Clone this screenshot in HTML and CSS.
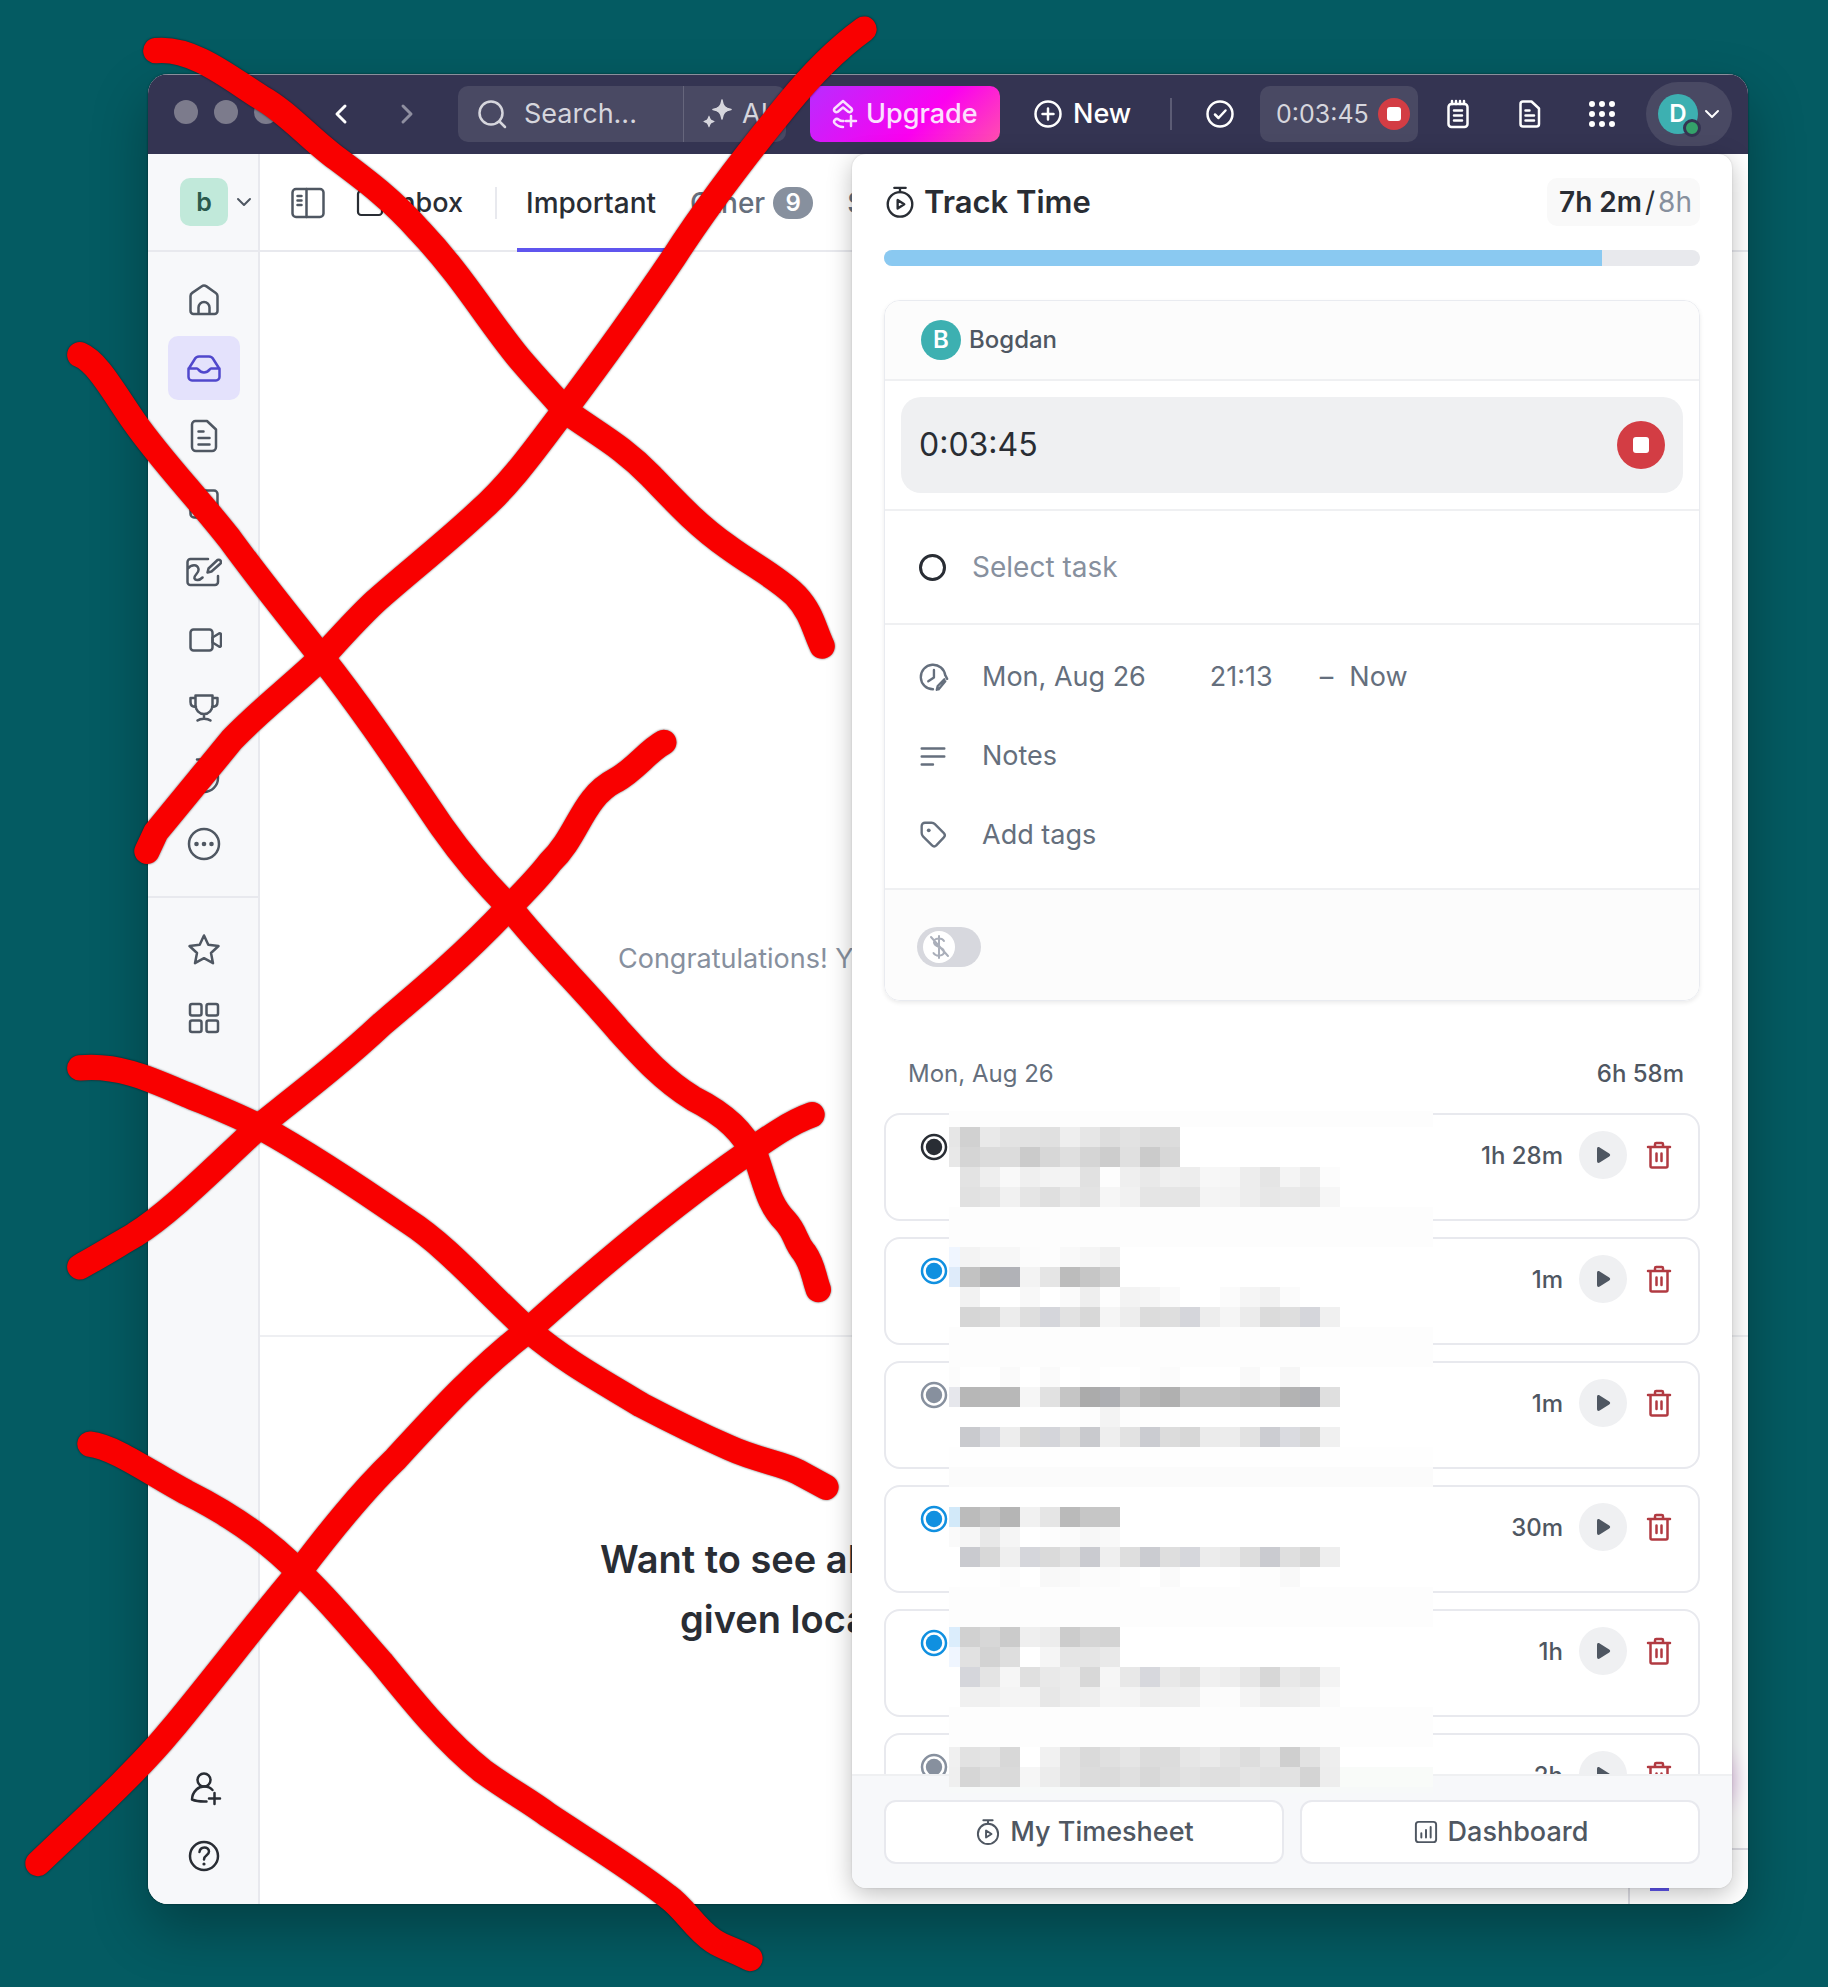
FILE: index.html
```html
<!DOCTYPE html>
<html lang="en">
<head>
<meta charset="utf-8">
<title>Track Time</title>
<link rel="stylesheet" href="styles.css">
</head>
<body>
<svg class="defs" aria-hidden="true">
  <symbol id="i-left" viewBox="0 0 36 36"><path d="M22 10l-8 8 8 8"/></symbol>
  <symbol id="i-right" viewBox="0 0 36 36"><path d="M14 10l8 8-8 8"/></symbol>
  <symbol id="i-down" viewBox="0 0 16 16"><path d="M2 5l6 6 6-6"/></symbol>
  <symbol id="i-search" viewBox="0 0 36 36"><circle cx="17" cy="17" r="11.5"/><path d="M25.500 25.500L31 31"/></symbol>
  <symbol id="i-spark" viewBox="0 0 36 36"><path class="solid" d="M22 3c1 7 3 9 10 10.500-7 1.500-9 3.500-10 10.500-1-7-3-9-10-10.500C19 12 21 10 22 3zM9 19c.7 4.500 2 5.800 6.500 6.500C11 26.200 9.700 27.500 9 32c-.7-4.500-2-5.800-6.500-6.500C7 24.800 8.300 23.500 9 19z"/><path stroke-width="1.500" d="M22 4c1 6.500 3 8.500 9 9.500-6 1-8 3-9 9.500-1-6.500-3-8.500-9-9.500 6-1 8-3 9-9.500zM9 21c.7 3 1.500 4 4.500 4.500-3 .5-3.800 1.500-4.500 4.500-.7-3-1.500-4-4.500-4.500C7.500 25 8.300 24 9 21z"/></symbol>
  <symbol id="i-upgrade" viewBox="0 0 36 36"><path d="M9.500 12.500L18 5l8.500 7.500c1.500 2-1 4.500-3 3.500L18 11.500 12.500 16c-2 1-4.500-1.500-3-3.500zM18 31c-4 0-6-1.200-8.500-4-1.500-2 1.500-5.500 4-3.500 1.500 1.200 3 1.800 5 1.500M26 20v10M21 25h10"/></symbol>
  <symbol id="i-plus" viewBox="0 0 36 36"><circle cx="18" cy="18" r="12.500"/><path d="M18 12.500v11M12.500 18h11"/></symbol>
  <symbol id="i-check" viewBox="0 0 36 36"><circle cx="18" cy="18" r="12.500"/><path d="M13 18.500l3.500 3.500 7-7.500"/></symbol>
  <symbol id="i-pad" viewBox="0 0 36 36"><rect x="8.500" y="8" width="19" height="23" rx="3"/><path d="M12 5v3M16 5v3M20 5v3M24 5v3M14 14.500h8M14 19.500h8M14 24.500h8"/></symbol>
  <symbol id="i-doc" viewBox="0 0 36 36"><path d="M11 5.500h8.500l7.500 7V28a2.500 2.500 0 0 1-2.500 2.500H11A2.500 2.500 0 0 1 8.500 28V8A2.500 2.500 0 0 1 11 5.500zM13.500 14.500h4M13.500 19.500h8.500M13.500 24.500h8.500"/></symbol>
  <symbol id="i-dots" viewBox="0 0 36 36"><g class="solid"><circle cx="8" cy="8" r="3"/><circle cx="18" cy="8" r="3"/><circle cx="28" cy="8" r="3"/><circle cx="8" cy="18" r="3"/><circle cx="18" cy="18" r="3"/><circle cx="28" cy="18" r="3"/><circle cx="8" cy="28" r="3"/><circle cx="18" cy="28" r="3"/><circle cx="28" cy="28" r="3"/></g></symbol>
  <symbol id="i-home" viewBox="0 0 36 36"><path d="M4.500 14c0-1.500.5-2.300 1.700-3.100l9.300-6.500c1.500-1 3.500-1 5 0l9.300 6.500c1.200.8 1.700 1.600 1.700 3.100v15a3 3 0 0 1-3 3h-21a3 3 0 0 1-3-3zM12.500 32v-6.500a5.500 5.500 0 0 1 11 0V32"/></symbol>
  <symbol id="i-tray" viewBox="0 0 36 36"><path d="M2.500 19l6-9.500C9.500 7.500 11 6.500 13 6.500h10c2 0 3.500 1 4.500 3l6 9.500v8a3.500 3.500 0 0 1-3.500 3.500H6A3.500 3.500 0 0 1 2.500 27zM2.500 18.500H11c1.500 0 2 4 7 4s5.500-4 7-4h8.500"/></symbol>
  <symbol id="i-page" viewBox="0 0 36 36"><path d="M9.500 3H21l9 8.500V29a4 4 0 0 1-4 4H10a4 4 0 0 1-4-4V6.500A3.500 3.500 0 0 1 9.500 3zM12.500 13.500h5M12.500 20h11M12.500 26.500h11"/></symbol>
  <symbol id="i-square" viewBox="0 0 36 36"><rect x="4.500" y="4.500" width="27" height="27" rx="3.500"/></symbol>
  <symbol id="i-board" viewBox="0 0 36 36"><path d="M22 5H4.500A3 3 0 0 0 1.500 8v20a3 3 0 0 0 3 3H29a3 3 0 0 0 3-3v-6M1.500 15c4-5 10-5 11 0 .8 4.500-5 6-4 9.500 1 2.500 5 2 8-1M21.500 18.500l1-4 9-8.500c2.500-1 4.500 1.500 3 3.500l-9 8z"/></symbol>
  <symbol id="i-video" viewBox="0 0 36 36"><rect x="4.500" y="7.500" width="22" height="21" rx="3"/><path d="M26.500 15.500l6.500-4c1.300-.5 2 .2 2 1.500v10c0 1.300-.7 2-2 1.500l-6.500-4z"/></symbol>
  <symbol id="i-trophy" viewBox="0 0 36 36"><path d="M9.500 5.500h17V15c0 5-3.500 9-8.500 9s-8.500-4-8.500-9zM9.500 8H4.500v4c0 3.500 2 5 5.500 5M26.500 8h5v4c0 3.500-2 5-5.500 5M18 24v3.500M11.500 30.500c3-2.500 10-2.500 13 0"/></symbol>
  <symbol id="i-clock" viewBox="0 0 36 36"><path d="M11 1.500h14"/><circle cx="18" cy="20" r="14"/><path d="M18 13v7"/></symbol>
  <symbol id="i-timer" viewBox="0 0 36 36"><path d="M12 3h12M18 3v4.500"/><circle cx="18" cy="20.500" r="13"/><path d="M15.500 16v9l7-4.500z"/></symbol>
  <symbol id="i-more" viewBox="0 0 36 36"><circle cx="18" cy="18" r="15"/><g class="solid"><circle cx="10.500" cy="18" r="2.300"/><circle cx="18" cy="18" r="2.300"/><circle cx="25.500" cy="18" r="2.300"/></g></symbol>
  <symbol id="i-star" viewBox="0 0 36 36"><path d="M18 3.500l4.300 9.300 10.200 1.200-7.500 7 2 10.200L18 26.200l-9 5 2-10.200-7.500-7 10.200-1.200z"/></symbol>
  <symbol id="i-grid" viewBox="0 0 36 36"><rect x="4" y="4" width="11.500" height="11.500" rx="2"/><rect x="20.500" y="4" width="11.500" height="11.500" rx="2"/><rect x="4" y="20.500" width="11.500" height="11.500" rx="2"/><rect x="20.500" y="20.500" width="11.500" height="11.500" rx="2"/></symbol>
  <symbol id="i-invite" viewBox="0 0 36 36"><circle cx="18" cy="10" r="6.500"/><path d="M26.500 20c-4-4.500-12-4.500-16-.5-3 3-4.500 6-4.500 10 4 1.800 9 2.200 14.500 2M28.500 23v11M23 28.500h11"/></symbol>
  <symbol id="i-help" viewBox="0 0 36 36"><circle cx="18" cy="18" r="14"/><path d="M13.500 14c.5-6 9.500-6 9.500-.5 0 4-5 3.500-5 8"/><circle class="solid" cx="18" cy="26" r="1.600"/></symbol>
  <symbol id="i-panel" viewBox="0 0 36 36"><rect x="2.500" y="4" width="31" height="28" rx="3.500"/><path d="M16.500 4v28M7.500 11h4M7.500 15.500h4M7.500 20h4"/></symbol>
  <symbol id="i-edit" viewBox="0 0 36 36"><path d="M31 16.500A13 13 0 1 0 18 31M19 10.500v8l-6 4M22 31.500l1-4 7-7M31 16l2 4M24 31l7-8.500"/></symbol>
  <symbol id="i-notes" viewBox="0 0 36 36"><path d="M6 10h24M6 18.500h24M6 27h12"/></symbol>
  <symbol id="i-tag" viewBox="0 0 36 36"><path d="M6 8.500A3.500 3.500 0 0 1 9.500 5h7c1.500 0 2.500.4 3.500 1.400l9.500 9.600c1.500 1.500 1.500 3 0 4.500l-8 8.500c-1.500 1.500-3 1.500-4.500 0L7.400 19.500C6.400 18.500 6 17.500 6 16z"/><circle class="solid" cx="13.500" cy="13" r="2"/></symbol>
  <symbol id="i-chart" viewBox="0 0 36 36"><rect x="5" y="5" width="26" height="26" rx="3.500"/><path d="M12 19.500V25M18 15.500V25M24 11.500V25"/></symbol>
  <symbol id="i-play" viewBox="0 0 16 16"><path class="solid" d="M2 2c0-1.800 1.300-2.400 2.700-1.500l9.500 6c1.300.9 1.300 2.100 0 3l-9.500 6C3.300 16.400 2 15.800 2 14z"/></symbol>
  <symbol id="i-trash" viewBox="0 0 28 28"><path d="M3 6h22M10 5.500V3.200C10 2.500 10.500 2 11.200 2h5.600c.7 0 1.200.5 1.200 1.200v2.300M5.500 6v19c0 1 .5 1.500 1.500 1.500h14c1 0 1.500-.5 1.500-1.500V6M11.500 12.500v7.500M16.500 12.500v7.500"/></symbol>
  <symbol id="i-status" viewBox="0 0 28 28"><circle cx="14" cy="14" r="12"/><circle class="solid" cx="14" cy="14" r="8.200"/></symbol>
</svg>

<div class="window">
  <header class="titlebar">
    <div class="lights"><i></i><i></i><i></i></div>
    <div class="history">
      <button aria-label="Back"><svg class="icon"><use href="#i-left"/></svg></button>
      <button class="dim" aria-label="Forward"><svg class="icon"><use href="#i-right"/></svg></button>
    </div>
    <div class="search">
      <svg class="icon"><use href="#i-search"/></svg>
      <input type="text" placeholder="Search..." aria-label="Search">
      <button class="ai"><svg class="icon"><use href="#i-spark"/></svg>AI</button>
    </div>
    <button class="upgrade"><svg class="icon"><use href="#i-upgrade"/></svg>Upgrade</button>
    <button class="new"><svg class="icon"><use href="#i-plus"/></svg>New</button>
    <div class="tools">
      <span class="rule"></span>
      <button aria-label="Tasks"><svg class="icon"><use href="#i-check"/></svg></button>
      <button class="running">0:03:45<span class="stop small"></span></button>
      <button aria-label="Notepad"><svg class="icon"><use href="#i-pad"/></svg></button>
      <button class="spaced" aria-label="Docs"><svg class="icon"><use href="#i-doc"/></svg></button>
      <button class="spaced" aria-label="Apps"><svg class="icon"><use href="#i-dots"/></svg></button>
      <button class="account" aria-label="Account"><span class="avatar">D<i class="online"></i></span><svg class="chev"><use href="#i-down"/></svg></button>
    </div>
  </header>

  <div class="body">
    <nav class="sidebar" aria-label="Main">
      <button class="workspace"><span class="tile">b</span><svg class="chev"><use href="#i-down"/></svg></button>
      <div class="group">
        <a href="#" aria-label="Home"><svg class="icon"><use href="#i-home"/></svg></a>
        <a href="#" class="active" aria-label="Inbox"><svg class="icon"><use href="#i-tray"/></svg></a>
        <a href="#" aria-label="Docs"><svg class="icon"><use href="#i-page"/></svg></a>
        <a href="#" aria-label="Dashboards"><svg class="icon"><use href="#i-square"/></svg></a>
        <a href="#" aria-label="Whiteboards"><svg class="icon"><use href="#i-board"/></svg></a>
        <a href="#" aria-label="Clips"><svg class="icon"><use href="#i-video"/></svg></a>
        <a href="#" aria-label="Goals"><svg class="icon"><use href="#i-trophy"/></svg></a>
        <a href="#" aria-label="Timesheets"><svg class="icon"><use href="#i-clock"/></svg></a>
        <a href="#" aria-label="More"><svg class="icon"><use href="#i-more"/></svg></a>
      </div>
      <div class="group second">
        <a href="#" aria-label="Favorites"><svg class="icon"><use href="#i-star"/></svg></a>
        <a href="#" aria-label="Spaces"><svg class="icon"><use href="#i-grid"/></svg></a>
      </div>
      <div class="group last">
        <a href="#" aria-label="Invite"><svg class="icon"><use href="#i-invite"/></svg></a>
        <a href="#" aria-label="Help"><svg class="icon"><use href="#i-help"/></svg></a>
      </div>
    </nav>

    <main class="main">
      <div class="tabs">
        <button class="toggle-panel" aria-label="Toggle panel"><svg class="icon"><use href="#i-panel"/></svg></button>
        <h1 class="crumb"><svg class="icon"><use href="#i-square"/></svg>Inbox</h1>
        <span class="rule"></span>
        <a href="#" class="tab current">Important</a>
        <a href="#" class="tab">Other<span class="count">9</span></a>
        <a href="#" class="tab">S</a>
      </div>
      <section class="empty"><p>Congratulations! Y</p></section>
      <section class="promo"><h2>Want to see al</h2><h2 class="inset">given loca</h2></section>
      <div class="dock"><span></span></div>
      <div class="glow"></div>
    </main>

    <aside class="popover" aria-label="Track Time">
      <div class="scroll">
        <div class="head">
          <h2><svg class="icon"><use href="#i-timer"/></svg>Track Time</h2>
          <p class="total"><strong>7h 2m</strong><span class="slash">/</span><span>8h</span></p>
        </div>
        <div class="bar"><div class="fill" style="width:88%"></div></div>
        <div class="card">
          <div class="person"><span class="avatar">B</span>Bogdan</div>
          <div class="clock"><div class="clock-box">0:03:45<button class="stop" aria-label="Stop"></button></div></div>
          <button class="task"><span class="ring"></span>Select task</button>
          <div class="fields">
            <div class="field when"><svg class="icon"><use href="#i-edit"/></svg><button class="date">Mon, Aug 26</button><button class="start">21:13</button><span class="dash">–</span><button>Now</button></div>
            <button class="field"><svg class="icon"><use href="#i-notes"/></svg>Notes</button>
            <button class="field"><svg class="icon"><use href="#i-tag"/></svg>Add tags</button>
          </div>
          <div class="billing">
            <label class="switch"><input type="checkbox" aria-label="Billable"><svg viewBox="0 0 32 32"><path d="M21 10c-2-3.500-10-3.500-10 1.500 0 5 10 4 10 9s-8 5.500-10.500 1.500M16 5v22M8 6l17 19"/></svg></label>
          </div>
        </div>
        <div class="day"><span>Mon, Aug 26</span><strong>6h 58m</strong></div>
        <div class="log">
          <ul class="entries">
            <li class="entry dark"><svg class="status"><use href="#i-status"/></svg><span class="dur">1h 28m</span><button class="play" aria-label="Start"><svg><use href="#i-play"/></svg></button><button class="trash" aria-label="Delete"><svg><use href="#i-trash"/></svg></button></li>
            <li class="entry blue"><svg class="status"><use href="#i-status"/></svg><span class="dur">1m</span><button class="play" aria-label="Start"><svg><use href="#i-play"/></svg></button><button class="trash" aria-label="Delete"><svg><use href="#i-trash"/></svg></button></li>
            <li class="entry"><svg class="status"><use href="#i-status"/></svg><span class="dur">1m</span><button class="play" aria-label="Start"><svg><use href="#i-play"/></svg></button><button class="trash" aria-label="Delete"><svg><use href="#i-trash"/></svg></button></li>
            <li class="entry blue"><svg class="status"><use href="#i-status"/></svg><span class="dur">30m</span><button class="play" aria-label="Start"><svg><use href="#i-play"/></svg></button><button class="trash" aria-label="Delete"><svg><use href="#i-trash"/></svg></button></li>
            <li class="entry blue"><svg class="status"><use href="#i-status"/></svg><span class="dur">1h</span><button class="play" aria-label="Start"><svg><use href="#i-play"/></svg></button><button class="trash" aria-label="Delete"><svg><use href="#i-trash"/></svg></button></li>
            <li class="entry"><svg class="status"><use href="#i-status"/></svg><span class="dur">2h</span><button class="play" aria-label="Start"><svg><use href="#i-play"/></svg></button><button class="trash" aria-label="Delete"><svg><use href="#i-trash"/></svg></button></li>
          </ul>
        </div>
      </div>
      <footer class="foot">
        <button><svg class="icon"><use href="#i-timer"/></svg>My Timesheet</button>
        <button><svg class="icon"><use href="#i-chart"/></svg>Dashboard</button>
      </footer>
      <svg class="mosaic" id="mosaic" viewBox="0 0 484 682" aria-hidden="true"></svg>
    </aside>
  </div>
</div>

<svg class="marker" viewBox="0 0 1443 1568" aria-hidden="true">
  <path d="M123 40C152 37 182 62 206 77C226 88 242 107 263 123C287 141 309 157 331 182C366 219 383 250 410 283C428 304 438 314 447 325C474 344 493 354 514 376C536 399 552 416 575 432C594 446 614 456 628 470C641 484 642 495 649 510"/>
  <path d="M682 23C660 39 641 58 621 83C590 121 559 161 532 203C503 246 477 282 444 326C424 352 405 380 378 404C349 431 323 451 296 475C280 490 267 505 254 519C230 542 205 561 183 584C160 612 142 634 123 657L116 672"/>
  <path d="M63 280C77 286 88 307 106 333C127 363 155 392 181 425C205 458 230 489 254 519C285 558 313 600 349 653C368 680 383 697 402 716C430 751 460 780 488 813C507 834 523 852 547 867C573 880 587 894 597 914C605 937 607 951 620 964C629 974 627 980 635 989C642 999 642 1007 646 1018"/>
  <path d="M524 586C511 593 502 607 486 616C459 630 457 659 434 681C424 694 413 705 402 716C366 754 334 781 302 808C270 838 240 861 206 888C170 921 135 957 106 975C89 985 76 993 63 1000"/>
  <path d="M63 843C93 840 119 852 147 864C166 872 187 880 206 890C246 912 286 939 322 964C353 984 380 1016 417 1050C448 1076 475 1090 506 1109C529 1121 551 1132 576 1143C598 1153 617 1155 630 1162L652 1174"/>
  <path d="M641 880C624 886 607 898 590 910C531 951 467 1005 417 1050C378 1080 346 1115 312 1152C283 1180 258 1212 236 1241C198 1286 169 1325 134 1367C106 1401 60 1442 30 1471"/>
  <path d="M71 1140C90 1142 119 1163 147 1178C177 1193 211 1215 236 1241C259 1262 277 1285 301 1312C327 1344 352 1375 381 1398C403 1414 417 1421 433 1433C463 1453 498 1474 527 1497C541 1507 548 1522 563 1532C572 1538 582 1540 592 1546"/>
</svg>
<script src="mosaic.js"></script>
</body>
</html>
```
FILE: styles.css
```css
* { box-sizing: border-box; }
html { background: #045b62; }
body {
  margin: 0;
  min-height: 100vh;
  padding: 74px 80px 83px 148px;
  display: flex;
  position: relative;
  background: #045b62;
  font-family: Inter, "Liberation Sans", sans-serif;
  font-size: 27px;
  line-height: 32px;
  color: #292d34;
  overflow-x: hidden;
}
h1, h2, p, ul { margin: 0; padding: 0; font: inherit; }
ul { list-style: none; }
button { border: 0; padding: 0; background: none; font: inherit; color: inherit; display: flex; align-items: center; cursor: pointer; }
a { color: inherit; text-decoration: none; }
svg { display: block; flex: none; fill: none; stroke: currentColor; stroke-width: 2.5; stroke-linecap: round; stroke-linejoin: round; }
.solid { fill: currentColor; stroke: none; }
.defs { position: absolute; width: 0; height: 0; }
.icon { width: 36px; height: 36px; }
.chev { width: 16px; height: 16px; stroke-width: 2; }
.rule { width: 2px; height: 32px; flex: none; }

.window {
  flex: 1;
  min-width: 0;
  display: flex;
  flex-direction: column;
  border-radius: 20px;
  overflow: hidden;
  background: #fff;
  box-shadow: 0 0 2px rgba(0,0,0,.6), 0 24px 56px rgba(0,0,0,.3);
}

.titlebar { height: 80px; display: flex; align-items: center; background: #343452; color: #fff; box-shadow: inset 0 1px #8a8f9c; padding: 0 16px 0 26px; }
.lights { display: flex; gap: 16px; margin-bottom: 4px; }
.lights i { width: 24px; height: 24px; border-radius: 50%; background: #7c7b8c; }
.history { display: flex; gap: 30px; margin-left: 45px; }
.history .icon { stroke-width: 3; }
.dim { color: #8f8fa0; }
.search { display: flex; align-items: center; width: 328px; height: 56px; margin-left: 33px; padding-left: 16px; gap: 14px; border-radius: 10px; background: #494963; color: #d6d6dd; }
.search input { flex: 1; min-width: 0; border: 0; padding: 0; background: none; font: inherit; color: inherit; outline: 0; }
.search input::placeholder { color: #d6d6dd; opacity: 1; }
.ai { width: 103px; height: 56px; padding-left: 16px; gap: 6px; border-left: 1px solid #66667c; }
.ai .icon { stroke-width: 1; }
.upgrade { width: 190px; height: 56px; margin-left: 24px; padding-left: 15px; gap: 5px; border-radius: 10px; color: #fbe0ff; font-weight: 500; background: linear-gradient(135deg, #b92cff 0%, #fb00f0 60%, #ff4fae 100%); }
.new { gap: 7px; margin-left: 30px; font-weight: 500; }
.tools { flex: 1; display: flex; align-items: center; justify-content: flex-end; gap: 22px; }
.tools .rule { margin-right: 8px; background: #5c5c75; }
.tools .spaced { margin-left: 14px; }
.running { width: 158px; height: 56px; justify-content: space-between; padding: 0 8px 0 16px; border-radius: 10px; background: #494963; color: #d6d6dd; font-size: 25px; }
.stop { width: 48px; height: 48px; border-radius: 50%; background: #d33d44; justify-content: center; }
.stop::before { content: ""; width: 16px; height: 16px; border-radius: 3px; background: #fff; }
.stop.small { display: flex; align-items: center; width: 32px; height: 32px; }
.stop.small::before { width: 14px; height: 14px; }
.account { height: 64px; width: 86px; margin-left: 4px; padding-left: 12px; gap: 6px; border-radius: 32px; background: #494963; }
.avatar { position: relative; display: flex; align-items: center; justify-content: center; width: 40px; height: 40px; border-radius: 50%; background: #3db0b1; color: #fff; font-size: 24px; font-weight: 600; }
.online { position: absolute; right: -3px; bottom: -3px; width: 18px; height: 18px; border-radius: 50%; background: #34a26a; border: 3px solid #343452; }

.body { flex: 1; position: relative; display: flex; }
.sidebar { width: 112px; flex: none; display: flex; flex-direction: column; background: #f7f8fa; border-right: 2px solid #e8e9ee; color: #4f5762; }
.workspace { height: 98px; padding-left: 32px; gap: 8px; border-bottom: 2px solid #e8e9ee; }
.tile { display: flex; align-items: center; justify-content: center; width: 48px; height: 48px; border-radius: 10px; background: #c1e9da; color: #2c5a4d; font-size: 25px; font-weight: 600; }
.group { display: flex; flex-direction: column; align-items: center; gap: 4px; padding: 16px 0 20px 2px; }
.group a { display: flex; align-items: center; justify-content: center; width: 72px; height: 64px; border-radius: 10px; }
.group .active { background: #e4e2fc; color: #5048cc; }
.second { border-top: 2px solid #e8e9ee; padding-top: 20px; }
.last { margin-top: auto; padding-bottom: 16px; color: #292d34; }

.main { flex: 1; min-width: 0; display: flex; flex-direction: column; position: relative; }
.tabs { height: 98px; flex: none; display: flex; align-items: center; gap: 16px; padding-left: 30px; box-shadow: inset 0 -2px #e8e9ee; font-size: 28px; font-weight: 500; }
.toggle-panel { color: #4f5762; }
.crumb { display: flex; align-items: center; gap: 6px; margin-left: 12px; font-size: 27px; font-weight: 500; }
.crumb .icon { width: 32px; height: 32px; }
.tabs .rule { background: #e8e9ee; margin: 0 4px 0 16px; }
.tab { align-self: stretch; display: flex; align-items: center; gap: 8px; padding: 0 9px; color: #656f7d; border: solid transparent; border-width: 4px 0; }
.current { color: #292d34; border-bottom-color: #5f55ee; }
.count { min-width: 40px; height: 32px; border-radius: 16px; background: #87909e; color: #fff; text-align: center; font-size: 24px; font-weight: 600; }
.empty { flex: 1084; display: flex; align-items: flex-start; padding-left: 358px; border-bottom: 2px solid #eeeff2; color: #87909e; }
.empty p { margin-top: 691px; }
.promo { flex: 567; padding-left: 340px; font-size: 38px; line-height: 60px; font-weight: 600; }
.promo h2:first-child { margin-top: 192px; }
.promo .inset { padding-left: 80px; }
.dock { position: absolute; right: 0; bottom: 0; width: 120px; height: 56px; border: solid #dddde4; border-width: 2px 0 0 2px; display: flex; align-items: flex-end; padding: 0 0 13px 20px; background: #fff; }
.dock span { width: 19px; height: 3px; background: #5f55ee; }
.glow { position: absolute; right: 16px; bottom: 94px; width: 50px; height: 60px; border-radius: 50%; box-shadow: 0 0 20px 0 #e2b4e8; }

.popover { position: absolute; top: 0; right: 16px; bottom: 16px; width: 880px; display: flex; flex-direction: column; border-radius: 14px; background: #fff; box-shadow: 0 6px 24px rgba(0,0,0,.25), 0 0 2px rgba(0,0,0,.15); }
.scroll { flex: 1 1 0; min-height: 0; overflow: hidden; padding: 24px 32px 0; }
.head { display: flex; align-items: center; justify-content: space-between; }
.head h2 { display: flex; align-items: center; gap: 7px; margin-left: -1px; font-size: 31px; font-weight: 600; }
.head .icon { width: 34px; height: 34px; }
.total { display: flex; align-items: center; gap: 3px; height: 48px; padding: 0 8px 0 12px; border-radius: 10px; background: #f9f9f9; color: #87909e; font-size: 28px; }
.total strong { font-weight: 600; color: #292d34; }
.slash { color: #292d34; }
.bar { height: 16px; margin-top: 24px; border-radius: 8px; background: #e8e9ed; overflow: hidden; }
.fill { height: 100%; background: #8ac9f1; }
.card { margin-top: 34px; border: 1px solid #e9ebf0; border-radius: 16px; overflow: hidden; box-shadow: 0 2px 4px rgba(0,0,0,.08); }
.card > * { border-top: 2px solid #eff0f2; }
.card > :first-child { border-top: 0; }
.person { display: flex; align-items: center; gap: 8px; height: 78px; padding-left: 36px; background: #fcfcfc; font-size: 24px; font-weight: 500; color: #4f5762; }
.clock { padding: 16px; }
.clock-box { display: flex; align-items: center; justify-content: space-between; height: 96px; padding: 0 18px; border-radius: 20px; background: #eff0f2; font-size: 32px; }
.task { width: 100%; height: 114px; padding-left: 34px; gap: 26px; color: #87909e; font-size: 28px; }
.ring { width: 27px; height: 27px; border: 3px solid #292d34; border-radius: 50%; }
.fields { padding: 29px 0 30px 31px; display: flex; flex-direction: column; gap: 33px; color: #656f7d; }
.field { display: flex; align-items: center; gap: 32px; height: 46px; }
.field .icon { width: 34px; height: 34px; }
.when { gap: 0; }
.when .date { margin: 0 64px 0 32px; }
.when .start { min-width: 66px; }
.when .dash { margin: 0 16px 0 44px; }
.billing { height: 112px; padding: 37px 32px; background: #fcfcfc; }
.switch { display: block; position: relative; width: 64px; height: 40px; }
.switch input { appearance: none; display: block; width: 64px; height: 40px; margin: 0; border-radius: 20px; background: #d7d8de; }
.switch svg { position: absolute; left: 6px; top: 4px; width: 32px; height: 32px; border-radius: 50%; background: #fff; color: #aaafba; stroke-width: 2; }
.day { display: flex; justify-content: space-between; align-items: center; margin-top: 57px; padding: 0 16px 0 24px; font-size: 24px; color: #656f7d; }
.day strong { font-weight: 500; color: #4f5762; }
.log { margin-top: 23px; }
.entries { display: flex; flex-direction: column; gap: 16px; }
.entry { display: flex; align-items: flex-start; height: 108px; padding: 16px 25px 0 34px; border: 2px solid #e8e9ee; border-radius: 16px; color: #87909e; }
.status { width: 28px; height: 28px; margin-top: 2px; }
.dark .status { color: #292d34; }
.blue .status { color: #1090e0; }
.dur { margin: 9px 16px 0 auto; font-size: 24px; font-weight: 500; color: #4f5762; }
.play { width: 48px; height: 48px; justify-content: center; border-radius: 50%; background: #eff0f2; color: #4f5762; }
.play svg { width: 16px; height: 16px; }
.trash { height: 48px; margin-left: 18px; color: #b13a41; }
.trash svg { width: 28px; height: 28px; }
.foot { display: flex; gap: 16px; padding: 24px 32px; border-top: 2px solid #eff0f2; border-radius: 0 0 14px 14px; background: #f7f8fa; }
.foot button { flex: 1; height: 64px; justify-content: center; gap: 8px; border: 2px solid #e8e9ee; border-radius: 12px; background: #fff; color: #4f5762; font-weight: 500; }
.foot .icon { width: 28px; height: 28px; }
.mosaic { position: absolute; left: 97px; bottom: 95px; width: 484px; height: 682px; stroke: none; shape-rendering: crispEdges; }

.marker { position: absolute; top: 0; left: 0; width: 100%; color: #f90000; stroke-width: 20; pointer-events: none; filter: drop-shadow(0 0 1px rgba(0,0,0,.6)); }
```
FILE: mosaic.js
```js
// Each line is one 20px row of the privacy mask: a half-width first cell, then full cells.
// "=" fills the whole row with one shade.
const rows = `
e6 d1 e9 e3 e2 e0 ee e6 dd e2 dd dc
e8 d5 db dc cb d7 df d5 cd e0 cb d7
ff e3 ee f9 ef f3 f3 e1 fd ef e9 ef ed f7 f6 ed e5 f4 ec fc
ff e1 e4 f1 e5 df e7 e3 f6 f1 e5 e5 e4 f4 f3 ed e7 e9 e7 f6
=fd
=fd
f0f6ff f3 f7 f7 fc fd f9 f5 f0
deebfa c2 b4 b1b2b7 f3 e5 bc c6 cf
ff f2 ff ff f8 ff fa ee fd f3 f5 fa ff ff fb f5 f1 fb ff ff
ff d6 d8 ec de d5d6db e2 d8 f5 ed dc de d5d6db ed f5 eb db de d5d6db f0
=fd
=fd
fc ff ff fa ff fa ff fd ff ff fd fb ff ff ff f9 ff f6
e6e7ec b7 b8 b8 f6 e1 c5 ab adaeb2 c4 b6 b0 c7 c6 c6 c2 c4 b3 aeafb3 df
ff ff ff ff ff ff fe fd f3 fd fe fe
ff c9cace d7d8dd ed d7 d4d5da df c9cace ee e2 cbccd1 dc d7 eb ec e2 cccdd2 dadbe0 d5 f0
=fe
=fb
=ff
d2e9f9 bb c4 b5 f1 e5 ba c6 c6
fa f6 e8 f5 ff fd fb f7 f9
ff c9cacf d8 ef d5d6db da e1 cacbd0 ef de cbccd1 de d6d7dc ec e9 dd cacbd0 df d6 ee
ff fe fe fc ff f8 f9 fc fb fd ff fa ff ff ff fd fd f9
=fd
=fd
dbedfc d1 d7 cb ef ec cc d5 d3
f0f6ff e1 d3 de ff f5 e5 e5 e9
ff d5d6db e4 f6 e0 e9 ec d8 f6 e8 d7d8dd e8 e2 f0 ed e6 d7 e8 e3 f3
ff f0 f0 f4 f4 e7 ec ee f5 f4 ee ef f0 fb fc f4 ed ee f0 fa
=fd
=fd
f0 e2 e4 d8 ff f1 e3 da e0 e5 dc dc e6 ea e3 dd e6 cf e2 ee
ef d6 dc da f6 ec e3 dc db e0 d8 dd e2 df df e4 e1 e2 d4 ed`.trim().split("\n");

const svg = document.getElementById("mosaic");
const cell = (x, y, w, h, c) => {
  const r = document.createElementNS("http://www.w3.org/2000/svg", "rect");
  Object.entries({ x, y, width: w, height: h, fill: "#" + (c.length === 2 ? c.repeat(3) : c) })
    .forEach(([k, v]) => r.setAttribute(k, v));
  svg.append(r);
};
cell(0, 0, 484, 16, "fd");
rows.forEach((line, i) => {
  const y = 16 + i * 20;
  if (line[0] === "=") return cell(0, y, 484, 20, line.slice(1));
  cell(0, y, 484, 20, "ff");
  line.split(" ").forEach((c, n) => cell(n ? 11 + (n - 1) * 20 : 0, y, n ? 20 : 11, 20, c));
});
cell(391, 656, 93, 20, "f9fbf9");
cell(0, 676, 484, 6, "f7f9f9");
```
